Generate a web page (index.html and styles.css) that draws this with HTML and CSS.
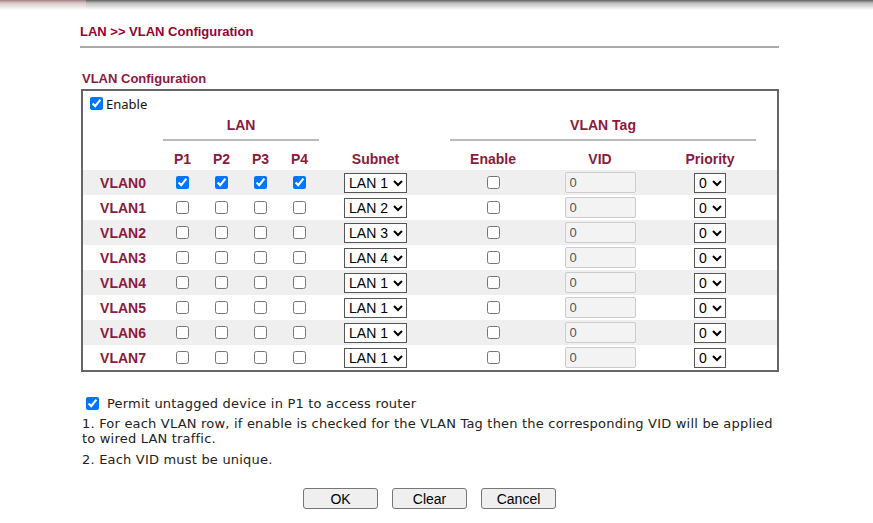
FILE: index.html
```html
<!DOCTYPE html>
<html lang="en">
<head>
    <meta charset="UTF-8">
    <title>LAN &gt;&gt; VLAN Configuration</title>
    <link rel="stylesheet" href="styles.css">
</head>
<body>
    <div class="topbar">
        <div class="topbar-left"></div>
        <div class="topbar-right"></div>
    </div>
    <div class="page">
        <h1 class="title">LAN &gt;&gt; VLAN Configuration</h1>
        <h2 class="section">VLAN Configuration</h2>
        <div class="box">
            <div class="enable-row">
                <input type="checkbox" id="vlanEnable" checked>
                <label for="vlanEnable">Enable</label>
            </div>
            <table class="vlan">
                <colgroup>
                    <col style="width:80px"><col style="width:39px"><col style="width:39px"><col style="width:39px"><col style="width:39px">
                    <col style="width:113px"><col style="width:18px"><col style="width:86px"><col style="width:128px"><col style="width:92px"><col style="width:21px">
                </colgroup>
                <thead>
                    <tr class="group">
                        <th></th>
                        <th colspan="4" class="group-head">LAN</th>
                        <th></th><th></th>
                        <th colspan="3" class="group-head">VLAN Tag</th>
                        <th></th>
                    </tr>
                    <tr class="cols">
                        <th></th><th>P1</th><th>P2</th><th>P3</th><th>P4</th>
                        <th>Subnet</th><th></th><th>Enable</th><th>VID</th><th>Priority</th><th></th>
                    </tr>
                </thead>
                <tbody id="rows"></tbody>
            </table>
        </div>

        <div class="permit">
            <input type="checkbox" id="permit" checked>
            <label for="permit">Permit untagged device in P1 to access router</label>
        </div>
        <p class="note">1. For each VLAN row, if enable is checked for the VLAN Tag then the corresponding VID will be applied to wired LAN traffic.</p>
        <p class="note">2. Each VID must be unique.</p>

        <div class="buttons">
            <button type="button">OK</button>
            <button type="button">Clear</button>
            <button type="button">Cancel</button>
        </div>
    </div>

    <script>
        var subnets = [1, 2, 3, 4, 1, 1, 1, 1];
        var body = document.getElementById('rows');
        subnets.forEach(function (lan, i) {
            var tr = document.createElement('tr');
            var ports = '';
            for (var p = 0; p < 4; p++) {
                ports += '<td><input type="checkbox"' + (i === 0 ? ' checked' : '') + '></td>';
            }
            var opts = '';
            for (var n = 1; n <= 4; n++) {
                opts += '<option' + (n === lan ? ' selected' : '') + '>LAN ' + n + '</option>';
            }
            var prio = '';
            for (var k = 0; k < 8; k++) {
                prio += '<option>' + k + '</option>';
            }
            tr.innerHTML = '<td class="name">VLAN' + i + '</td>' + ports +
                '<td><select class="subnet">' + opts + '</select></td><td></td>' +
                '<td><input type="checkbox"></td>' +
                '<td><input type="text" class="vid" value="0" disabled></td>' +
                '<td><select class="prio">' + prio + '</select></td><td></td>';
            body.appendChild(tr);
        });
    </script>
</body>
</html>
```

FILE: styles.css
```css
body {
    margin: 0;
    background-color: #fff;
    font-family: "Liberation Sans", Arial, sans-serif;
    color: #222;
}
.topbar {
    display: flex;
    height: 10px;
}
.topbar-left {
    width: 86px;
    background: linear-gradient(#a08080, #d8c8c8 3px, #fff 10px);
}
.topbar-right {
    flex: 1;
    background: linear-gradient(#5e5e5e, #bdbdbd 3px, #fff 10px);
}
.page {
    width: 699px;
    margin-left: 80px;
}
.title {
    margin: 14px 0 0;
    padding-bottom: 6px;
    font-size: 13px;
    line-height: 16px;
    font-weight: bold;
    color: #990033;
    border-bottom: 2px solid #aaa;
}
.section {
    margin: 23px 0 2px;
    padding-left: 2px;
    font-size: 13px;
    line-height: 16px;
    font-weight: bold;
    color: #8b1a3e;
}
.box {
    box-sizing: border-box;
    width: 698px;
    margin-left: 1px;
    border: 2px solid #666;
}
.enable-row {
    display: flex;
    align-items: center;
    height: 13px;
    padding: 6px 0 2px 7px;
    font-family: "Noto Sans", sans-serif;
    font-size: 13px;
    color: #111;
}
.enable-row input {
    margin: 0 3px 0 0;
}
.vlan {
    width: 694px;
    table-layout: fixed;
    border-collapse: separate;
    border-spacing: 0;
}
.vlan th {
    padding: 0;
    font-size: 14px;
    font-weight: bold;
    color: #8b1a3e;
    text-align: center;
}
.vlan .group th {
    height: 26px;
    padding-bottom: 1px;
}
.vlan .group-head {
    border-bottom: 2px solid #bbb;
}
.vlan .cols th {
    height: 26px;
    padding-bottom: 3px;
    vertical-align: bottom;
}
.vlan td {
    height: 25px;
    padding: 0;
    text-align: center;
    vertical-align: middle;
}
.vlan tbody tr:nth-child(odd) {
    background-color: #efefef;
}
.vlan .name {
    font-size: 14px;
    font-weight: bold;
    color: #8b1a3e;
}
.vlan input[type="checkbox"] {
    display: block;
    margin: 0 auto;
}
.subnet,
.prio {
    display: block;
    margin: 0 auto;
    height: 20px;
    padding: 0;
    border: 1px solid #555;
    border-radius: 0;
    background-color: #fff;
    font-family: "Liberation Sans", Arial, sans-serif;
    font-size: 14px;
    color: #000;
}
.subnet {
    width: 63px;
}
.prio {
    width: 32px;
}
.vid {
    display: block;
    box-sizing: border-box;
    width: 71px;
    height: 21px;
    margin: 0 auto;
    padding: 0 4px;
    border: 1px solid #ccc;
    border-radius: 2px;
    background-color: #f3f3f3;
    font-family: "Liberation Sans", Arial, sans-serif;
    font-size: 13px;
    color: #555;
}
.permit {
    display: flex;
    align-items: center;
    height: 15px;
    margin-top: 24px;
    padding-left: 6px;
    font-family: "DejaVu Sans", Verdana, sans-serif;
    font-size: 13px;
    letter-spacing: 0.2px;
}
.permit input {
    margin: 0 8px 0 0;
}
.note {
    margin: 6px 0 0;
    padding-left: 2px;
    font-family: "DejaVu Sans", Verdana, sans-serif;
    font-size: 13px;
    letter-spacing: 0.2px;
    line-height: 15px;
}
.permit + .note {
    margin-top: 5px;
}
.buttons {
    display: flex;
    justify-content: center;
    gap: 14px;
    margin-top: 21px;
}
.buttons button {
    width: 75px;
    height: 21px;
    padding: 0;
    border: 1px solid #767676;
    border-radius: 3px;
    background-color: #efefef;
    font-family: "Liberation Sans", Arial, sans-serif;
    font-size: 14px;
    color: #000;
}
```
